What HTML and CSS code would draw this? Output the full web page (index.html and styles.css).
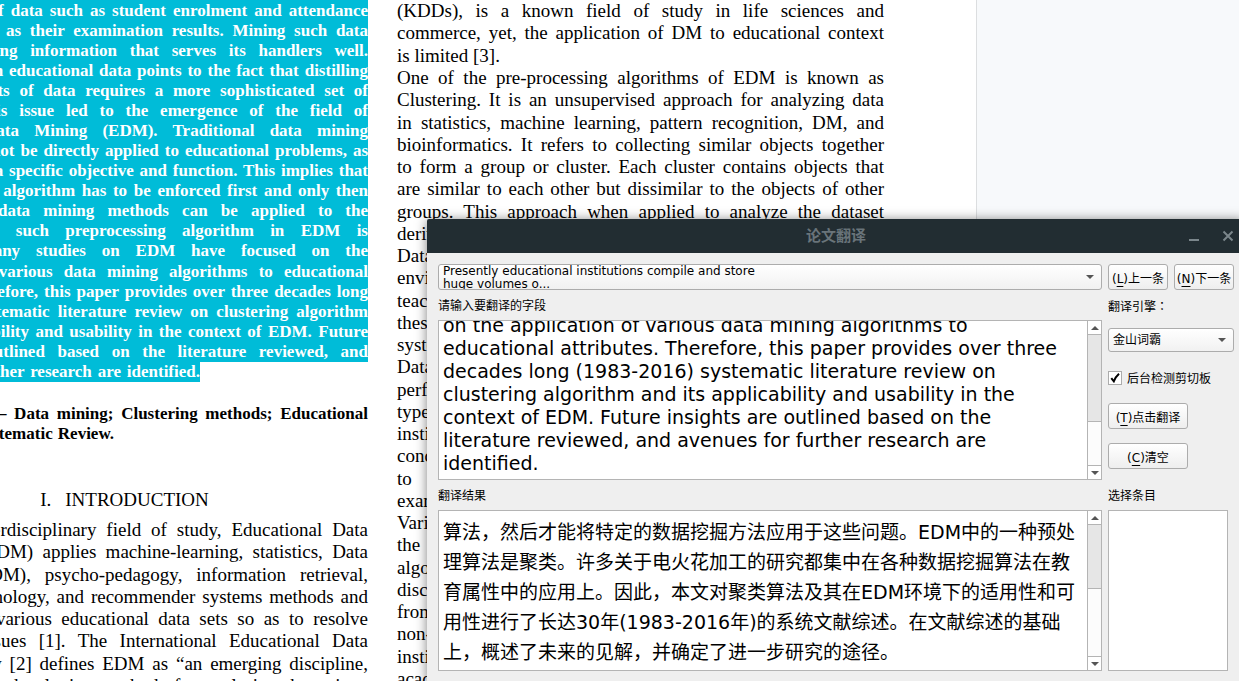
FILE: index.html
```html
<!DOCTYPE html>
<html lang="zh-CN">
<head>
<meta charset="utf-8">
<title>论文翻译</title>
<link rel="stylesheet" href="styles.css">
</head>
<body>
<main class="viewer">
  <article class="paper" lang="en">
    <section class="column column--left">
      <div class="abstract abstract--marked">
        <p class="line">huge volumes of data such as student enrolment and attendance</p>
        <p class="line">records as well as their examination results. Mining such data</p>
        <p class="line">yields stimulating information that serves its handlers well.</p>
        <p class="line">Rapid growth in educational data points to the fact that distilling</p>
        <p class="line">massive amounts of data requires a more sophisticated set of</p>
        <p class="line">algorithms. This issue led to the emergence of the field of</p>
        <p class="line">Educational Data Mining (EDM). Traditional data mining</p>
        <p class="line">algorithms cannot be directly applied to educational problems, as</p>
        <p class="line">they may have a specific objective and function. This implies that</p>
        <p class="line">a preprocessing algorithm has to be enforced first and only then</p>
        <p class="line">some specific data mining methods can be applied to the</p>
        <p class="line">problems. One such preprocessing algorithm in EDM is</p>
        <p class="line">Clustering. Many studies on EDM have focused on the</p>
        <p class="line">application of various data mining algorithms to educational</p>
        <p class="line">attributes. Therefore, this paper provides over three decades long</p>
        <p class="line">(1983-2016) systematic literature review on clustering algorithm</p>
        <p class="line">and its applicability and usability in the context of EDM. Future</p>
        <p class="line">insights are outlined based on the literature reviewed, and</p>
        <p class="line line--end">avenues for further research are identified.</p>
      </div>
      <div class="abstract abstract--keywords">
        <p class="line line--indent">Keywords — Data mining; Clustering methods; Educational</p>
        <p class="line line--short">Technology; Systematic Review.</p>
      </div>
      <h2 class="heading"><span>I.</span><span>INTRODUCTION</span></h2>
      <div class="body">
        <p class="line line--cap">As an interdisciplinary field of study, Educational Data</p>
        <p class="line line--cap">Mining (EDM) applies machine-learning, statistics, Data</p>
        <p class="line line--cap">Mining (DM), psycho-pedagogy, information retrieval,</p>
        <p class="line">cognitive psychology, and recommender systems methods and</p>
        <p class="line">techniques to various educational data sets so as to resolve</p>
        <p class="line">educational issues [1]. The International Educational Data</p>
        <p class="line">Mining Society [2] defines EDM as “an emerging discipline,</p>
        <p class="line">concerned with developing methods for exploring the unique</p>
      </div>
    </section>
    <section class="column column--right">
      <div class="body">
        <p class="line">(KDDs), is a known field of study in life sciences and</p>
        <p class="line">commerce, yet, the application of DM to educational context</p>
        <p class="line line--left">is limited [3].</p>
      </div>
      <div class="body">
        <p class="line">One of the pre-processing algorithms of EDM is known as</p>
        <p class="line">Clustering. It is an unsupervised approach for analyzing data</p>
        <p class="line">in statistics, machine learning, pattern recognition, DM, and</p>
        <p class="line">bioinformatics. It refers to collecting similar objects together</p>
        <p class="line">to form a group or cluster. Each cluster contains objects that</p>
        <p class="line">are similar to each other but dissimilar to the objects of other</p>
        <p class="line">groups. This approach when applied to analyze the dataset</p>
        <p class="line line--left">derived</p>
      </div>
      <div class="body">
        <p class="line line--left">Data</p>
        <p class="line line--left">environments</p>
        <p class="line line--left">teaching</p>
        <p class="line line--left">these</p>
        <p class="line line--left">systems</p>
        <p class="line line--left">Data</p>
        <p class="line line--left">performance</p>
        <p class="line line--left">types</p>
        <p class="line line--left">institutions</p>
        <p class="line line--left">conducted</p>
        <p class="line line--left">to</p>
        <p class="line line--left">examine</p>
        <p class="line line--left">Various</p>
        <p class="line line--left">the</p>
        <p class="line line--left">algorithms</p>
        <p class="line line--left">discussed</p>
        <p class="line line--left">from</p>
        <p class="line line--left">non-</p>
        <p class="line line--left">institutional</p>
        <p class="line line--left">academic</p>
      </div>
    </section>
  </article>
</main>

<form class="dialog" aria-labelledby="dialog-title">
  <header class="titlebar">
    <h1 class="title" id="dialog-title">论文翻译</h1>
    <button class="winbtn" type="button" aria-label="最小化">
      <svg width="12" height="12" viewBox="0 0 12 12"><path d="M1 10h10" stroke="currentColor" stroke-width="2"/></svg>
    </button>
    <button class="winbtn" type="button" aria-label="关闭">
      <svg width="12" height="12" viewBox="0 0 12 12"><path d="M1.500 1.500l9 9M10.500 1.500l-9 9" stroke="currentColor" stroke-width="2"/></svg>
    </button>
  </header>
  <div class="content">
    <div class="combo">
      <select class="select select--history" aria-label="历史记录">
        <option>Presently educational institutions compile and store huge volumes o...</option>
      </select>
      <svg class="arrow" width="8" height="4" viewBox="0 0 8 4"><path d="M0 0h8L4 4z" fill="currentColor"/></svg>
    </div>
    <div class="pager">
      <button class="button" type="button">(<u>L</u>)上一条</button>
      <button class="button" type="button">(<u>N</u>)下一条</button>
    </div>

    <label class="label" for="source">请输入要翻译的字段</label>
    <label class="label" for="engine">翻译引擎<span class="colon" lang="zh-TW">：</span></label>

    <div class="editor">
      <textarea class="text text--source" id="source" lang="en">
Many studies on EDM have focused
on the application of various data mining algorithms to
educational attributes. Therefore, this paper provides over three
decades long (1983-2016) systematic literature review on
clustering algorithm and its applicability and usability in the
context of EDM. Future insights are outlined based on the
literature reviewed, and avenues for further research are
identified.</textarea>
      <div class="scrollbar scrollbar--source">
        <button class="step" type="button" aria-label="向上"><svg width="8" height="4" viewBox="0 0 8 4"><path d="M0 4h8L4 0z" fill="currentColor"/></svg></button>
        <div class="trough"><div class="rest"></div><div class="thumb"></div></div>
        <button class="step step--down" type="button" aria-label="向下"><svg width="8" height="4" viewBox="0 0 8 4"><path d="M0 0h8L4 4z" fill="currentColor"/></svg></button>
      </div>
    </div>
    <div class="side">
      <div class="combo">
        <select class="select" id="engine"><option>金山词霸</option></select>
        <svg class="arrow" width="8" height="4" viewBox="0 0 8 4"><path d="M0 0h8L4 4z" fill="currentColor"/></svg>
      </div>
      <label class="check">
        <span class="tick">
          <input class="box" type="checkbox" checked>
          <svg class="mark" width="10" height="10" viewBox="0 0 10 10"><path d="M1.300 5.200L3.800 8.300Q5.500 4 9 .8" fill="none" stroke="#000" stroke-width="2"/></svg>
        </span>
        后台检测剪切板
      </label>
      <button class="button button--wide" type="button">(<u>T</u>)点击翻译</button>
      <button class="button button--wide" type="button">(<u>C</u>)清空</button>
    </div>

    <label class="label" for="result">翻译结果</label>
    <span class="label" id="items-label">选择条目</span>

    <div class="editor">
      <textarea class="text text--result" id="result" readonly>
这意味着必须首先执行
算法，然后才能将特定的数据挖掘方法应用于这些问题。EDM中的一种预处理算法是聚类。许多关于电火花加工的研究都集中在各种数据挖掘算法在教育属性中的应用上。因此，本文对聚类算法及其在EDM环境下的适用性和可用性进行了长达30年(1983-2016年)的系统文献综述。在文献综述的基础上，概述了未来的见解，并确定了进一步研究的途径。</textarea>
      <div class="scrollbar scrollbar--result">
        <button class="step" type="button" aria-label="向上"><svg width="8" height="4" viewBox="0 0 8 4"><path d="M0 4h8L4 0z" fill="currentColor"/></svg></button>
        <div class="trough"><div class="rest"></div><div class="thumb"></div></div>
        <button class="step step--down" type="button" aria-label="向下"><svg width="8" height="4" viewBox="0 0 8 4"><path d="M0 0h8L4 4z" fill="currentColor"/></svg></button>
      </div>
    </div>
    <div class="items" role="listbox" aria-labelledby="items-label"></div>
  </div>
</form>
<script src="app.js"></script>
</body>
</html>
```
FILE: styles.css
```css
* { box-sizing: border-box; }

body {
  margin: 0;
  height: 100vh;
  overflow: hidden;
  position: relative;
  background: #f7f9fb;
  color: #000;
  font-family: "DejaVu Sans", "Noto Sans CJK SC", sans-serif;
  font-size: 12px;
}

p, h1, h2 { margin: 0; }

/* Document page */
.viewer { height: 100%; overflow: hidden; }

.paper {
  display: flex;
  gap: 29px;
  width: 977px;
  min-height: 100%;
  background: #fff;
  border-right: 1px solid #dcdee0;
  font-family: "Liberation Serif", serif;
}

.column { flex: none; width: 487px; }
.column--left { margin-left: -119px; }

.line {
  white-space: nowrap;
  text-align: justify;
  text-align-last: justify;
}
.line--left { text-align-last: left; }

.abstract {
  font-size: 17px;
  font-weight: bold;
  line-height: 20px;
}
.abstract--marked { color: #fff; }
.abstract--marked .line { background: #00bcd8; }
.abstract--marked .line:nth-child(13n + 1) { padding-top: 1px; }
.abstract--marked .line--end { width: 319px; }
.abstract--keywords { padding-top: 22px; }
.line--indent { padding-left: 27px; }
.line--short { width: 233px; }

.heading {
  display: flex;
  justify-content: center;
  gap: 14px;
  padding-top: 45px;
  font-size: 19px;
  font-weight: normal;
  line-height: 22px;
}

.body { font-size: 19px; line-height: 22px; }
.body .line:nth-child(4n + 2) { padding-bottom: 1px; }
.column--left .body { padding-top: 8px; }
.line--cap { padding-left: 32px; }

/* Translator window */
.dialog {
  position: absolute;
  top: 219px;
  left: 427px;
  right: -6px;
  background: #efefef;
  border-radius: 3px 3px 0 0;
  box-shadow: 0 1px 12px rgba(0, 0, 0, .5);
}

.titlebar {
  display: grid;
  grid-template-columns: 1fr 34px 34px;
  align-items: center;
  height: 34px;
  background: #222d32;
  color: #69747a;
  border-radius: 2px 2px 0 0;
}
.title {
  padding-left: 68px;
  text-align: center;
  font-size: 15px;
  line-height: 34px;
  font-weight: bold;
}
.winbtn {
  display: grid;
  place-items: center;
  width: 34px;
  height: 34px;
  padding: 0;
  border: 0;
  background: none;
  color: #7b868b;
}

.content {
  display: grid;
  grid-template-columns: 1fr 126px;
  grid-template-rows: 26px 30px 160px 30px 161px;
  column-gap: 6px;
  padding: 11px 11px 12px;
}

.combo { display: grid; align-items: center; position: relative; }
.combo .arrow { position: absolute; right: 8px; color: #555; pointer-events: none; }

.select {
  appearance: none;
  width: 100%;
  height: 24px;
  padding: 0 4px;
  border: 1px solid #acacac;
  border-radius: 3px;
  background: linear-gradient(#fff, #f1f1f1);
  color: #000;
  font: inherit;
}
.select--history {
  height: 26px;
  padding-right: 330px;
  white-space: normal;
  line-height: 13px;
}

.pager { display: flex; gap: 6px; }

.button {
  flex: 1;
  height: 26px;
  padding: 0;
  border: 1px solid #acacac;
  border-radius: 3px;
  background: linear-gradient(#fff, #eee);
  color: #000;
  font: inherit;
  white-space: nowrap;
}
.button u { text-underline-offset: 3px; }
.button--wide { flex: none; width: 80px; }

.label { align-self: center; padding-top: 2px; line-height: 18px; }
.colon { font-family: "Noto Sans CJK TC", sans-serif; }

.editor {
  display: flex;
  border: 1px solid #b4b4b4;
  background: #fff;
}
.text {
  flex: 1;
  min-width: 0;
  padding: 4px;
  border: 0;
  outline: 0;
  resize: none;
  overflow: hidden;
  background: #fff;
  color: #000;
  font: inherit;
  font-size: 19px;
}
.text--source { line-height: 23px; }
.text--result { line-height: 30px; padding-bottom: 3px; }

.scrollbar {
  display: flex;
  flex-direction: column;
  width: 14px;
  border-left: 1px solid #b4b4b4;
}
.step {
  display: grid;
  place-items: center;
  height: 14px;
  padding: 0;
  border: 0;
  border-bottom: 1px solid #b4b4b4;
  background: #fff;
  color: #555;
}
.step--down { border-bottom: 0; border-top: 1px solid #b4b4b4; }
.trough { flex: 1; display: flex; flex-direction: column; }
.rest { background: #e6e6e6; border-bottom: 1px solid #b4b4b4; }
.thumb { flex: 1; background: #fcfcfc; }
.scrollbar--source .rest { height: 67%; }
.scrollbar--result .rest { height: 49%; }

.side {
  display: flex;
  flex-direction: column;
  gap: 14px;
  padding-top: 8px;
}
.check { display: flex; align-items: center; gap: 5px; height: 23px; }
.tick { display: grid; place-items: center; }
.box {
  grid-area: 1 / 1;
  appearance: none;
  width: 14px;
  height: 14px;
  margin: 0;
  border: 1px solid #acacac;
  background: #fff;
}
.mark { grid-area: 1 / 1; position: relative; pointer-events: none; }

.items { width: 120px; border: 1px solid #b4b4b4; background: #fff; }
```
FILE: app.js
```js
// Keep both editors showing the end of their text.
document.querySelectorAll(".text").forEach(function (box) {
  box.scrollTop = box.scrollHeight;
});
```
